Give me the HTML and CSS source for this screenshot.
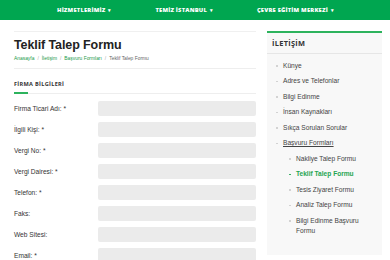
FILE: index.html
```html
<!DOCTYPE html>
<html lang="tr">
<head>
<meta charset="utf-8">
<link rel="stylesheet" href="styles.css">
</head>
<body>
<header class="topbar">
  <nav class="nav">
    <span class="nav-item">HİZMETLERİMİZ <span class="caret">▾</span></span>
    <span class="nav-item">TEMİZ İSTANBUL <span class="caret">▾</span></span>
    <span class="nav-item">ÇEVRE EĞİTİM MERKEZİ <span class="caret">▾</span></span>
  </nav>
</header>
<div class="page">
  <main class="main">
    <h1 class="title">Teklif Talep Formu</h1>
    <div class="crumbs">
      <a>Anasayfa</a><span class="sep">/</span><a>İletişim</a><span class="sep">/</span><a>Başvuru Formları</a><span class="sep">/</span><span class="cur">Teklif Talep Formu</span>
    </div>
    <h2 class="section">FİRMA BİLGİLERİ</h2>
    <form class="form">
      <div class="row"><label>Firma Ticari Adı: *</label><span class="input"></span></div>
      <div class="row"><label>İlgili Kişi: *</label><span class="input"></span></div>
      <div class="row"><label>Vergi No: *</label><span class="input"></span></div>
      <div class="row"><label>Vergi Dairesi: *</label><span class="input"></span></div>
      <div class="row"><label>Telefon: *</label><span class="input"></span></div>
      <div class="row"><label>Faks:</label><span class="input"></span></div>
      <div class="row"><label>Web Sitesi:</label><span class="input"></span></div>
      <div class="row"><label>Email: *</label><span class="input"></span></div>
    </form>
  </main>
  <aside class="side">
    <div class="box">
      <h3 class="box-title">İLETİŞİM</h3>
      <ul class="menu">
        <li>Künye</li>
        <li>Adres ve Telefonlar</li>
        <li>Bilgi Edinme</li>
        <li>İnsan Kaynakları</li>
        <li>Sıkça Sorulan Sorular</li>
        <li class="open"><span class="u">Başvuru Formları</span>
          <ul class="sub">
            <li>Nakliye Talep Formu</li>
            <li class="active">Teklif Talep Formu</li>
            <li>Tesis Ziyaret Formu</li>
            <li>Analiz Talep Formu</li>
            <li>Bilgi Edinme Başvuru Formu</li>
          </ul>
        </li>
      </ul>
    </div>
    <div class="box box2"></div>
  </aside>
</div>
</body>
</html>
```
FILE: styles.css
```css
* { box-sizing: border-box; }
html, body { margin: 0; padding: 0; background: #fff; }
body { font-family: "Liberation Sans", Arial, sans-serif; color: #333; overflow: hidden; height: 260px; }

.topbar { background: #00a650; height: 20px; }
.nav { display: flex; padding-left: 57px; height: 20px; align-items: center; }
.nav-item { color: #fff; font-family: "Open Sans", sans-serif; font-weight: 800; font-size: 5.8px; letter-spacing: 0.2px; margin-right: 44px; }
.caret { font-size: 5px; margin-left: 1px; }

.page { display: flex; padding: 11px 8px 0 14px; gap: 11px; }
.main { width: 242px; border-top: 1px solid #f0f0f0; }
.title { margin: 0; padding-top: 5px; font-family: "Liberation Sans", Arial, sans-serif; font-weight: 700; font-size: 12.5px; line-height: 16px; color: #222; letter-spacing: -0.1px; }
.crumbs { font-size: 4.9px; line-height: 8px; margin-top: 2px; padding-bottom: 5px; border-bottom: 1px solid #eee; color: #666; }
.crumbs a { color: #1a9a4a; }
.crumbs .sep { color: #aaa; margin: 0 3px; }
.section { margin: 0; padding-top: 11px; font-family: "Open Sans", sans-serif; font-weight: 700; font-size: 5.6px; line-height: 9px; letter-spacing: 0.3px; color: #333; padding-bottom: 4px; border-bottom: 1px solid #eee; position: relative; }
.section::after { content: ""; position: absolute; left: 0; bottom: -1px; width: 14px; height: 2px; background: #2db35d; }
.form { padding-top: 7px; display: flex; flex-direction: column; gap: 6px; }
.row { display: flex; align-items: center; height: 15px; }
.row label { width: 84px; font-size: 6.6px; color: #333; }
.input { flex: 1; height: 15px; background: #ebebeb; border-radius: 2px; }

.side { width: 115px; }
.box { background: #f8f8f8; border-top: 2px solid #2db35d; padding-bottom: 13px; }
.box-title { margin: 0; font-family: "Open Sans", sans-serif; font-weight: 700; font-size: 7.4px; letter-spacing: 0.3px; color: #333; padding: 3px 5px 0; height: 21px; line-height: 14px; border-bottom: 1px solid #e6e6e6; }
.menu { list-style: none; margin: 0; padding: 4px 20px 0 8px; font-size: 6.6px; color: #444; }
.menu li { position: relative; padding-left: 8px; line-height: 8px; padding-top: 3.75px; padding-bottom: 3.75px; }
.menu li::before { content: ""; position: absolute; left: 1px; top: 7px; width: 1.5px; height: 1.5px; background: #ccc; border-radius: 50%; }
.menu .u { text-decoration: underline; }
.sub { list-style: none; margin: 3.75px 0 0 6px; padding: 0; }
.sub li { padding-left: 7px; line-height: 10px; padding-top: 2.75px; padding-bottom: 2.75px; }
.sub li::before { left: 0; top: 7px; }
.sub li.active { color: #1fa552; font-weight: 700; }
.sub li.active::before { background: #1fa552; }
.box2 { margin-top: 10px; height: 10px; padding: 0; background: #fff; }
```
